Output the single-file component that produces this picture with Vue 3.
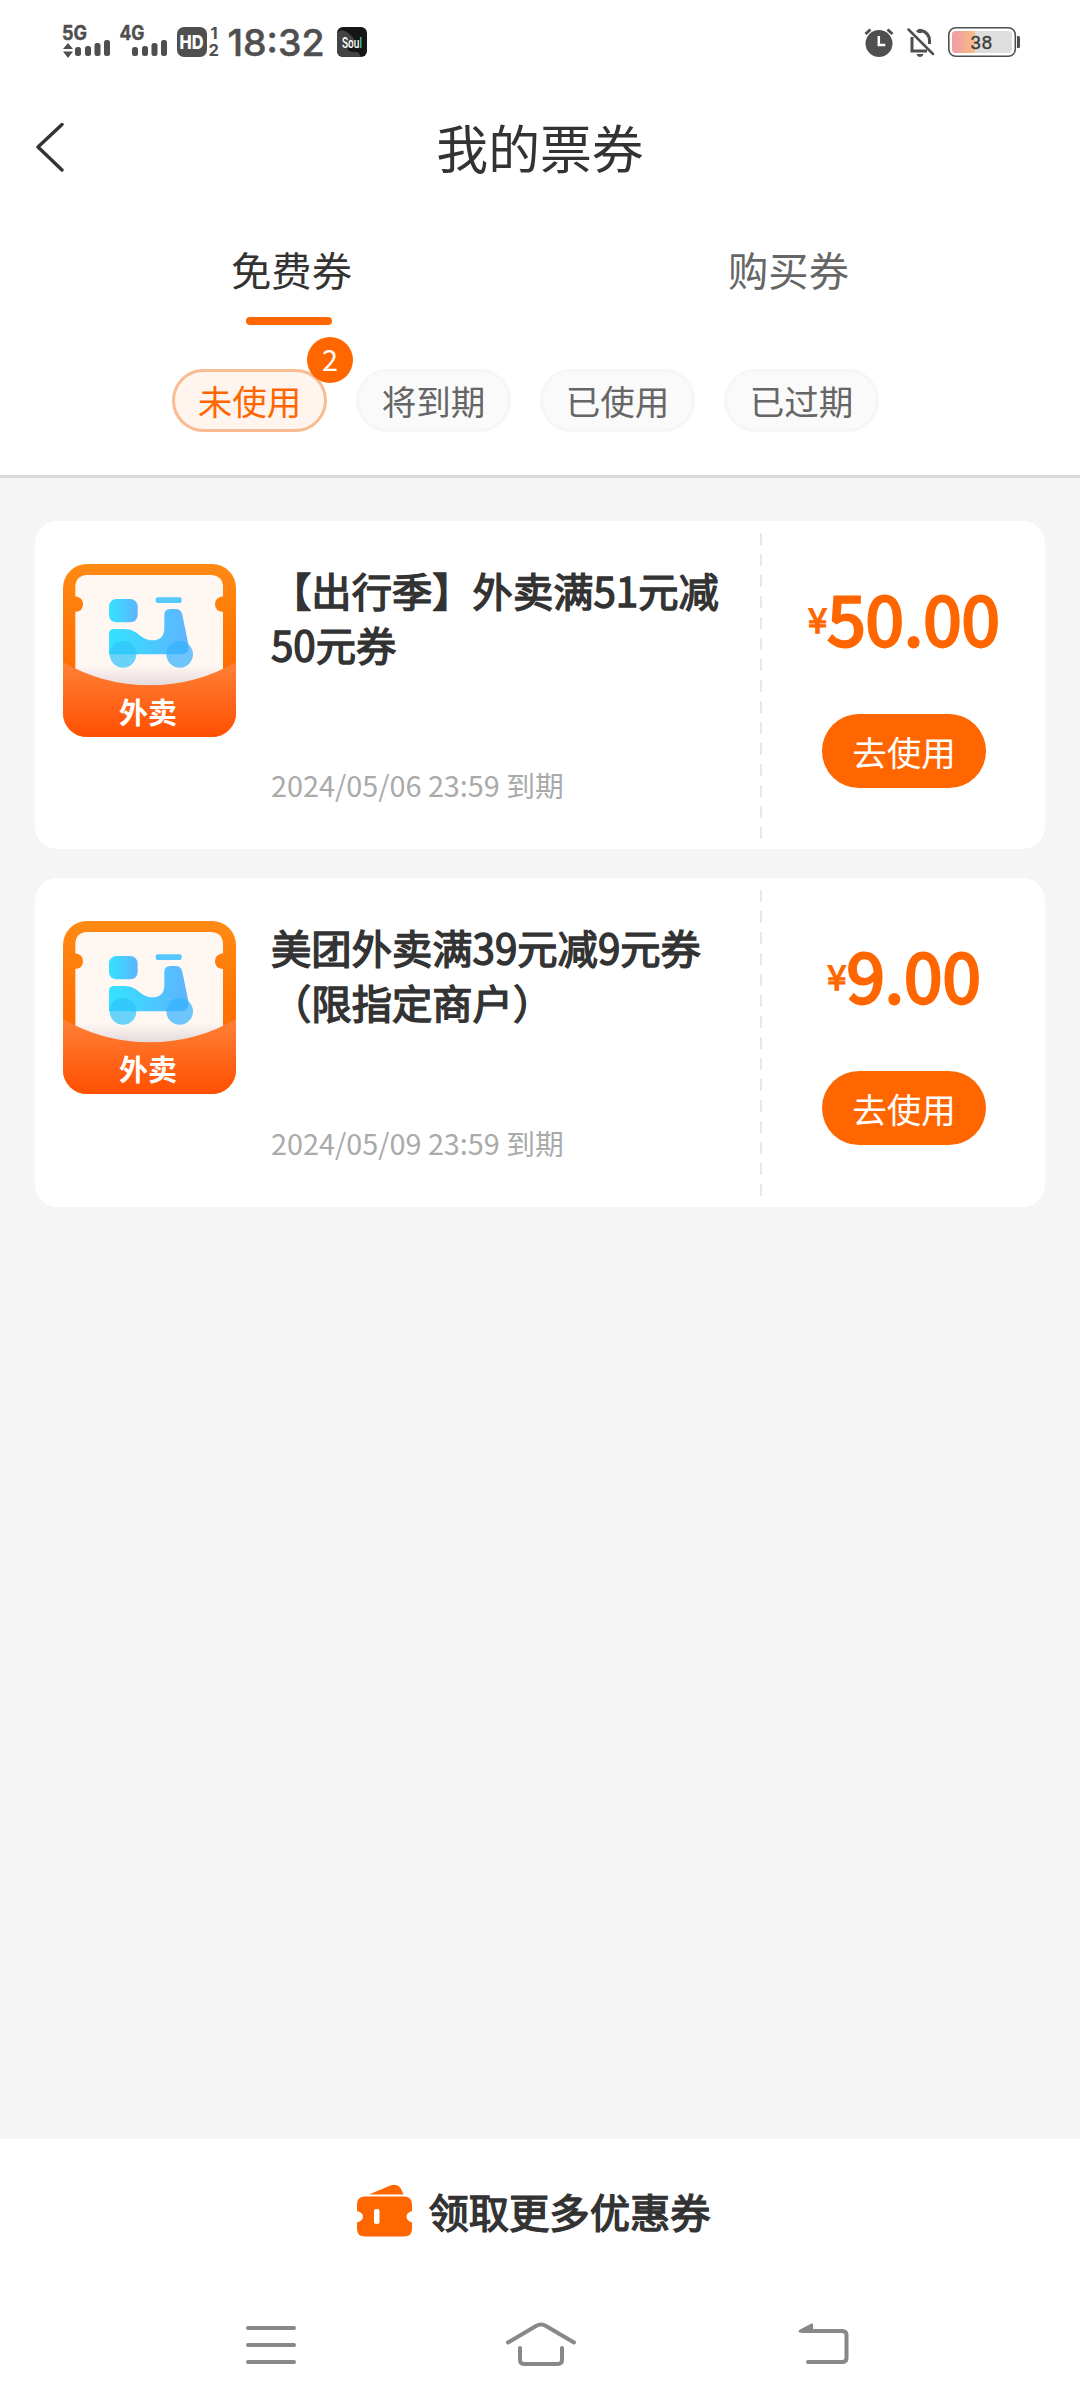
<script setup>
const tabs = [
  { label: '免费券', active: true },
  { label: '购买券', active: false },
]
const filters = [
  { label: '未使用', active: true, count: 2 },
  { label: '将到期' },
  { label: '已使用' },
  { label: '已过期' },
]
const coupons = [
  { title: '【出行季】外卖满51元减50元券', expire: '2024/05/06 23:59 到期', price: '50.00' },
  { title: '美团外卖满39元减9元券（限指定商户）', expire: '2024/05/09 23:59 到期', price: '9.00' },
]
</script>

<template>
  <div class="page">
    <div class="status">
      <svg class="status-left" width="360" height="84" viewBox="0 0 360 84" fill="#4f4f4f">
        <g font-family="Inter, sans-serif" font-weight="700" font-size="20" stroke="#4f4f4f" stroke-width=".4">
          <text x="22" y="39.5" textLength="25" lengthAdjust="spacingAndGlyphs">5G</text>
          <text x="79.5" y="39.5" textLength="25" lengthAdjust="spacingAndGlyphs">4G</text>
        </g>
        <path d="M28 43l5 6H23zM28 58l5-6.5H23z" />
        <g id="bars">
          <rect x="35" y="47" width="6" height="9" rx="2.5" />
          <rect x="45" y="46" width="6" height="10" rx="2.5" />
          <rect x="54.500" y="43" width="6" height="13" rx="2.500" />
          <rect x="64" y="40" width="6" height="16" rx="2.500" />
        </g>
        <use href="#bars" x="57" />
        <rect x="137" y="27" width="30" height="30" rx="7" />
        <text x="139.500" y="49" fill="#fff" font-family="Inter, sans-serif" font-weight="800" font-size="18.500" textLength="24" lengthAdjust="spacingAndGlyphs">HD</text>
        <g font-family="Inter, sans-serif" font-weight="700" font-size="16.500">
          <text x="170.500" y="39">1</text>
          <text x="168.500" y="56">2</text>
        </g>
        <text x="187.500" y="56" stroke="#4f4f4f" stroke-width=".5" font-family="Inter, sans-serif" font-weight="500" font-size="37" textLength="97" lengthAdjust="spacingAndGlyphs">18:32</text>
        <rect x="297" y="27" width="30" height="30" rx="6" fill="#161616" />
        <path d="M297 33q3-4 8-2q7 4 10 10l-8 8q4 4 11 3l3 5h-17q-7 0-7-7z" fill="#444" />
        <text x="302" y="47.500" fill="#fff" font-family="Roboto, sans-serif" font-weight="500" font-size="15" textLength="20" lengthAdjust="spacingAndGlyphs">Sou<tspan fill="#2fd5bd">l</tspan></text>
      </svg>
      <svg class="status-right" width="220" height="84" viewBox="0 0 220 84" fill="none">
        <circle cx="39" cy="43.500" r="13.500" fill="#4f4f4f" />
        <path d="M25.500 34l5-4.500M52.500 34l-5-4.500" stroke="#4f4f4f" stroke-width="3" />
        <path d="M38.800 36v9h6.500" stroke="#fff" stroke-width="2.500" />
        <path d="M72 37v14h15M77 32q2-2 4-1.500q8.500 2 8.500 10.500v3" stroke="#4f4f4f" stroke-width="3" />
        <path d="M68.500 29.500l24.500 24.500" stroke="#4f4f4f" stroke-width="2.500" stroke-linecap="round" />
        <path d="M77.500 29.500h5M76.500 54h7q-1 3-3.500 3t-3.500-3z" fill="#4f4f4f" />
        <circle cx="80" cy="31" r="2.300" fill="#4f4f4f" />
        <defs>
          <linearGradient id="charge"><stop offset=".2" stop-color="#f3a0a0" /><stop offset="1" stop-color="#f7bd85" /></linearGradient>
        </defs>
        <rect x="108.800" y="27.700" width="66.500" height="28.600" rx="7" stroke="#4f4f4f" stroke-width="1.600" />
        <rect x="112" y="31" width="60" height="22" rx="3.500" fill="#dedede" />
        <path d="M115.500 31H135v22h-19.500q-3.500 0-3.500-3.500v-15q0-3.500 3.500-3.500z" fill="url(#charge)" />
        <path d="M177 36h1.500q1.500 0 1.500 1.500v9q0 1.500-1.500 1.500H177z" fill="#4f4f4f" />
        <text x="130.500" y="49" fill="#3c3c3c" stroke="#3c3c3c" stroke-width=".4" font-family="Liberation Sans, sans-serif" font-size="18.500" textLength="21.500">38</text>
      </svg>
    </div>

    <header class="header">
      <div class="navbar">
        <svg class="back" width="30" height="50" viewBox="0 0 30 50">
          <path d="M27 2.500L3 25L27 48" fill="none" stroke="#333" stroke-width="3.400" stroke-linecap="round" stroke-linejoin="round" />
        </svg>
        <h1>我的票券</h1>
      </div>
      <div class="tabs">
        <div v-for="t in tabs" :key="t.label" class="tab" :class="{ active: t.active }">
          <span>{{ t.label }}</span>
          <i></i>
        </div>
      </div>
      <div class="filters">
        <div v-for="f in filters" :key="f.label" class="chip" :class="{ active: f.active }">
          {{ f.label }}
          <b v-if="f.count" class="badge">{{ f.count }}</b>
        </div>
      </div>
    </header>

    <main class="list">
      <article v-for="(c, i) in coupons" :key="c.title" class="card">
        <svg class="logo" width="173" height="173" viewBox="0 0 519 519">
          <defs>
            <linearGradient :id="'bg' + i" x2="0" y2="1"><stop offset="0" stop-color="#ff8a14" /><stop offset=".6" stop-color="#ff6d00" /></linearGradient>
            <linearGradient :id="'pocket' + i" x2="0" y2="1"><stop offset="0" stop-color="#ff8136" /><stop offset="1" stop-color="#ff4f02" /></linearGradient>
            <linearGradient :id="'bike' + i"><stop offset="0" stop-color="#33e2ff" /><stop offset="1" stop-color="#5eb4ff" /></linearGradient>
            <linearGradient :id="'paper' + i" x2="0" y2="1"><stop offset=".82" stop-color="#fff7f2" /><stop offset="1" stop-color="#e3d9dc" /></linearGradient>
            <clipPath :id="'clip' + i"><rect width="519" height="519" rx="72" /></clipPath>
          </defs>
          <g :clip-path="`url(#clip${i})`">
            <rect width="519" height="519" :fill="`url(#bg${i})`" />
            <path d="M70 33H446Q480 36 480 70V97Q456 100 456 121T480 144V365H37V144Q60 142 60 121T37 97V70Q37 36 70 33Z" :fill="`url(#paper${i})`" />
            <path d="M0 294Q120 364 260 364T519 294V519H0Z" :fill="`url(#pocket${i})`" />
          </g>
          <g :fill="`url(#bike${i})`">
            <rect x="138" y="105" width="86" height="70" rx="22" />
            <rect x="278" y="100" width="78" height="17" rx="6" fill="#55c8fd" />
            <path d="M138 210Q138 195 153 195H185C225 195 232 229 268 229C292 229 304 216 304 192V153Q304 135 322 135H338Q354 135 358 152L377 246Q377 271 356 271H138Z" />
          </g>
          <circle cx="180" cy="271" r="40" fill="#2fc4fa" fill-opacity=".72" />
          <circle cx="350" cy="271" r="40" fill="#35b1ff" fill-opacity=".72" />
          <text x="168" y="479" fill="#fff" font-family="Noto Sans CJK SC, sans-serif" font-weight="700" font-size="87" textLength="174">外卖</text>
        </svg>
        <div class="info">
          <h2>{{ c.title }}</h2>
          <p>{{ c.expire }}</p>
        </div>
        <div class="divider"></div>
        <div class="side">
          <div class="price"><small>¥</small><span>{{ c.price }}</span></div>
          <button class="use">去使用</button>
        </div>
      </article>
    </main>

    <footer class="footer">
      <div class="more">
        <svg width="55" height="53" viewBox="0 0 55 53" fill="#ff6600">
          <path d="M12 10.500L34 1.200Q42-1 45 7l1.500 3.500z" />
          <path d="M8 12.500H47Q55 12.500 55 20.500V27Q49.500 28.500 49.500 32.500T55 38.500V45Q55 52.500 47 52.500H8Q0 52.500 0 45V38.500Q6 36.500 6 32.500T0 27V20.500Q0 12.500 8 12.500Z" />
          <rect x="17" y="25" width="5.500" height="15" rx="2" fill="#fff" />
        </svg>
        <span>领取更多优惠券</span>
      </div>
      <div class="sysnav">
        <svg width="54" height="46" viewBox="244 2322 54 46"><path d="M248 2328h46M248 2345h46M248 2362h46" /></svg>
        <svg class="home" width="74" height="46" viewBox="504 2322 74 46"><path d="M508 2342.500L536 2326q5-3 10 0L574 2342.500M520 2348v12q0 4 5 4h32q5 0 5-4v-12" /></svg>
        <svg width="54" height="46" viewBox="796 2322 54 46"><path d="M802 2331h40q4.500 0 4.500 4v23q0 4-4.500 4h-34" /><path class="solid" d="M798.500 2331.500q0-1 1.500-2l11.500-6q1.500-.5 1.500 1v8h-13q-1.500 0-1.500-1z" /></svg>
      </div>
    </footer>
  </div>
</template>

<style>
body { margin: 0; background: #f5f5f5; }
</style>

<style scoped>
.page {
  width: 1080px;
  height: 2408px;
  display: flex;
  flex-direction: column;
  background: #f5f5f5;
  color: #333;
  font-family: "Noto Sans CJK SC", sans-serif;
  text-spacing-trim: space-all;
  overflow: hidden;
}
h1, h2, p { margin: 0; font-weight: 400; }
.status {
  display: flex;
  justify-content: space-between;
  height: 84px;
  padding: 0 20px 0 40px;
  background: #fff;
}
.header {
  box-sizing: border-box;
  height: 394px;
  background: #fff;
  border-bottom: 3px solid #dadada;
}
.navbar {
  display: grid;
  grid-template-columns: 1fr auto 1fr;
  align-items: center;
  height: 125px;
  padding: 0 35px;
}
.navbar h1 { font-size: 51.84px; line-height: 76px; }
.tabs { display: flex; padding: 0 43px; height: 116px; }
.tab {
  flex: 1;
  display: flex;
  flex-direction: column;
  align-items: center;
  padding-top: 30px;
  font-size: 40.32px;
  line-height: 60px;
  color: #666;
}
.tab i { width: 86px; height: 8px; margin: 18px 5px 0 0; border-radius: 4px; }
.tab.active { color: #333; }
.tab.active i { background: #ff6600; }
.filters { display: flex; gap: 29px; padding: 44px 0 0 172px; }
.chip {
  position: relative;
  box-sizing: border-box;
  width: 155px;
  height: 63px;
  border: 3px solid #f6f6f6;
  border-radius: 32px;
  background: #fafafa;
  color: #666;
  font-size: 34.56px;
  line-height: 57px;
  text-align: center;
}
.chip.active { color: #ff6600; background: #fff5ee; border-color: #f8bb92; }
.badge {
  position: absolute;
  top: -35px;
  right: -29px;
  width: 46px;
  height: 46px;
  border-radius: 50%;
  background: #ff6600;
  color: #fff;
  font-size: 28.8px;
  font-weight: 400;
  line-height: 44px;
}
.list {
  flex: 1;
  display: flex;
  flex-direction: column;
  gap: 28.8px;
  padding: 43px 35px 0;
}
.card {
  display: flex;
  height: 328.4px;
  border-radius: 22px;
  background: #fff;
}
.logo { flex: none; margin: 43px 0 0 28px; }
.info {
  flex: none;
  display: flex;
  flex-direction: column;
  justify-content: space-between;
  width: 524px;
  padding: 42px 0 43px 35px;
  box-sizing: border-box;
}
.info h2 {
  width: 454px;
  font-size: 40.32px;
  line-height: 54.4px;
  -webkit-text-stroke: 1.4px #333;
}
.info p { font-size: 28.8px; line-height: 43px; color: #aaa; }
.divider {
  flex: none;
  width: 2px;
  height: 306px;
  margin-top: 11.5px;
  background: repeating-linear-gradient(#e8e8e8 0 12px, transparent 12px 21px);
}
.side {
  flex: 1;
  display: flex;
  flex-direction: column;
  align-items: center;
  padding-left: 1px;
}
.price {
  display: flex;
  align-items: center;
  height: 100px;
  margin-top: 45px;
  color: #ff6600;
  font-size: 69.12px;
  line-height: 100px;
  -webkit-text-stroke: 2.8px #ff6600;
}
.price small { margin-top: 3px; font-size: 34.56px; -webkit-text-stroke-width: 1.4px; }
.use {
  width: 164px;
  height: 74px;
  margin-top: 48px;
  padding: 0;
  border: 0;
  border-radius: 37px;
  background: #ff6600;
  color: #fff;
  font: 34.56px/74px "Noto Sans CJK SC", sans-serif;
}
.footer { height: 269px; background: #fff; }
.more {
  display: flex;
  justify-content: center;
  align-items: center;
  gap: 16px;
  height: 143px;
  padding-right: 12px;
  font-size: 40.32px;
  -webkit-text-stroke: 1.4px #333;
}
.more svg { -webkit-text-stroke: 0; }
.sysnav { display: flex; padding: 40px 0 0 244px; }
.sysnav svg { fill: none; stroke: #888; stroke-width: 4; stroke-linecap: round; }
.sysnav .home { margin: 0 218px 0 206px; }
.sysnav .solid { fill: #888; stroke: none; }
</style>
